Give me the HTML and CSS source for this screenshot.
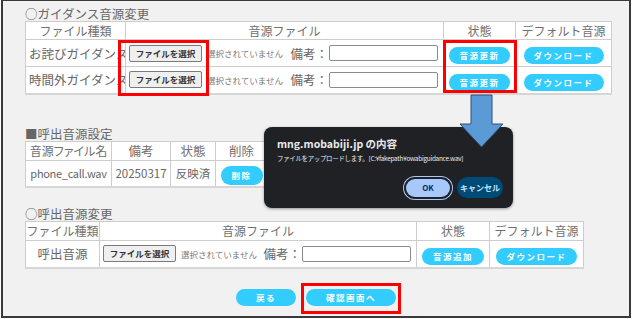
FILE: index.html
```
<!DOCTYPE html>
<html lang="ja">
<head>
<meta charset="utf-8">
<link rel="stylesheet" href="styles.css">
</head>
<body>
<div class="page">
  <div class="frame">
    <section class="sec sec1">
      <div class="sec-title">○ガイダンス音源変更</div>
      <table class="grid t1">
        <colgroup><col class="w100"><col class="w318"><col class="w72"><col class="w96"></colgroup>
        <tr><th>ファイル種類</th><th>音源ファイル</th><th>状態</th><th>デフォルト音源</th></tr>
        <tr>
          <td class="label">お詫びガイダンス</td>
          <td><div class="filecell"><span class="file-btn">ファイルを選択</span><span class="no-file">選択されていません</span><span class="note">備考：<span class="input"></span></span></div></td>
          <td><span class="pill w61">音源更新</span></td>
          <td><span class="pill w80">ダウンロード</span></td>
        </tr>
        <tr>
          <td class="label">時間外ガイダンス</td>
          <td><div class="filecell"><span class="file-btn">ファイルを選択</span><span class="no-file">選択されていません</span><span class="note">備考：<span class="input"></span></span></div></td>
          <td><span class="pill w61">音源更新</span></td>
          <td><span class="pill w80">ダウンロード</span></td>
        </tr>
      </table>
    </section>
    <section class="sec sec2">
      <div class="sec-title">■呼出音源設定</div>
      <table class="grid t2">
        <colgroup><col class="w86"><col class="w59"><col class="w45"><col class="w52"></colgroup>
        <tr><th class="narrow">音源ファイル名</th><th>備考</th><th>状態</th><th>削除</th></tr>
        <tr>
          <td class="data fname">phone_call.wav</td>
          <td class="data">20250317</td>
          <td class="data">反映済</td>
          <td><span class="pill w42 tall">削除</span></td>
        </tr>
      </table>
    </section>
    <section class="sec sec3">
      <div class="sec-title">○呼出音源変更</div>
      <table class="grid t3">
        <colgroup><col class="w74"><col class="w317"><col class="w73"><col class="w94"></colgroup>
        <tr><th>ファイル種類</th><th>音源ファイル</th><th>状態</th><th>デフォルト音源</th></tr>
        <tr>
          <td class="label center">呼出音源</td>
          <td><div class="filecell"><span class="file-btn">ファイルを選択</span><span class="no-file">選択されていません</span><span class="note">備考：<span class="input"></span></span></div></td>
          <td><span class="pill w62">音源追加</span></td>
          <td><span class="pill w81">ダウンロード</span></td>
        </tr>
      </table>
    </section>
    <div class="actions">
      <span class="pill w60">戻る</span>
      <span class="pill w90">確認画面へ</span>
    </div>
  </div>

  <div class="mark mark1"></div>
  <div class="mark mark2"></div>
  <div class="mark mark3"></div>

  <div class="dialog">
    <div class="dlg-title">mng.mobabiji.jp の内容</div>
    <div class="dlg-msg">ファイルをアップロードします。[C:¥fakepath¥owabiguidance.wav]</div>
    <div class="dlg-actions">
      <span class="dlg-ok">OK</span>
      <span class="dlg-cancel">キャンセル</span>
    </div>
  </div>

  <svg class="arrow" width="52" height="58" viewBox="0 0 52 58">
    <polygon points="16,2 37,2 37,31 48,31 26.5,54 5,31 16,31" fill="#5b9bd5" stroke="#2f4f78" stroke-width="1"/>
  </svg>
</div>
</body>
</html>
```
FILE: styles.css
```
* { box-sizing: border-box; }
body {
  margin: 0;
  background: #ffffff;
  font-family: "Noto Sans CJK JP", "Noto Sans", sans-serif;
  color: #666;
}
.page {
  position: relative;
  width: 634px;
  height: 319px;
  overflow: hidden;
}
.frame {
  margin-left: 1px;
  width: 630px;
  height: 318px;
  border: 2px solid #3a3a3a;
  border-top-width: 1px;
  background: #f1f1f1;
  padding-top: 6px;
}
.sec { padding-left: 22px; }
.sec2 { margin-top: 32px; }
.sec3 { margin-top: 19px; }
.sec-title {
  font-size: 12.5px;
  line-height: 14px;
  height: 14px;
  white-space: nowrap;
  color: #666;
}
.grid {
  border-collapse: collapse;
  table-layout: fixed;
  background: #fff;
  border-bottom: 2px solid #d6d6d6;
}
.t1 { width: 586px; }
.t2 { width: 242px; }
.t3 { width: 558px; }
.grid th, .grid td {
  border: 1px solid #cdcdcd;
  padding: 0;
  font-weight: normal;
  text-align: center;
  overflow: hidden;
  white-space: nowrap;
}
.grid th {
  height: 18px;
  font-size: 12px;
  line-height: 16px;
  color: #707070;
}
.sec2 .grid th, .sec3 .grid th { height: 19px; }
.grid td { height: 27px; }
.grid td.label {
  text-align: left;
  padding-left: 3px;
  font-size: 12.5px;
  color: #666;
}
.grid td.label.center { text-align: center; padding-left: 0; }
.grid td.data { font-size: 11.5px; color: #666; }
.grid td.fname { font-size: 11px; letter-spacing: -0.3px; }
.sec2 .grid th { font-size: 12.5px; }
.sec2 .grid th.narrow { font-size: 12px; font-feature-settings: "palt"; }

.w100 { width: 100px; } .w318 { width: 318px; } .w72 { width: 72px; } .w96 { width: 96px; }
.w86 { width: 86px; } .w59 { width: 59px; } .w45 { width: 45px; } .w52 { width: 52px; }
.w74 { width: 74px; } .w317 { width: 317px; } .w73 { width: 73px; } .w94 { width: 94px; }

.filecell {
  display: flex;
  align-items: center;
  padding: 0 5px 0 3px;
}
.file-btn {
  display: inline-block;
  flex: none;
  width: 73px;
  height: 17px;
  line-height: 15px;
  font-size: 8.5px;
  font-weight: bold;
  color: #333;
  background: #efefef;
  border: 1px solid #7a7a7a;
  border-radius: 2px;
  text-align: center;
}
.no-file {
  margin-left: 5px;
  font-size: 8.5px;
  color: #777;
}
.note {
  margin-left: auto;
  display: flex;
  align-items: center;
  font-size: 12.5px;
  color: #666;
}
.input {
  display: inline-block;
  width: 109px;
  height: 16px;
  margin-left: 1px;
  background: #fff;
  border: 1px solid #8a8a8a;
  border-radius: 2px;
}

.pill {
  display: inline-block;
  vertical-align: middle;
  height: 17px;
  line-height: 17px;
  border-radius: 9px;
  background: #33ccff;
  color: #fff;
  font-size: 8.5px;
  font-weight: bold;
  letter-spacing: 1.5px;
  text-align: center;
}
.pill.tall { height: 19px; line-height: 19px; border-radius: 10px; }
.w61 { width: 61px; } .w80 { width: 80px; } .w62 { width: 62px; } .w81 { width: 81px; }
.w42 { width: 42px; } .w60 { width: 60px; } .w90 { width: 90px; }

.actions {
  margin-top: 20px;
  display: flex;
  justify-content: center;
  gap: 10px;
}

.mark {
  position: absolute;
  border: 3px solid #ff0000;
}
.mark1 { left: 118px; top: 40px; width: 91px; height: 56px; }
.mark2 { left: 443px; top: 40px; width: 74px; height: 53px; }
.mark3 { left: 301px; top: 283px; width: 100px; height: 31px; }

.dialog {
  position: absolute;
  left: 264px;
  top: 127px;
  width: 249px;
  height: 81px;
  background: #202124;
  border-radius: 8px;
  box-shadow: 0 1px 3px rgba(0,0,0,0.4);
  padding: 10px 10px 0 13px;
  color: #e8eaed;
}
.dlg-title {
  font-size: 10.5px;
  font-weight: bold;
  line-height: 14px;
  white-space: nowrap;
}
.dlg-msg {
  margin-top: 3px;
  font-size: 6.4px;
  letter-spacing: -0.25px;
  line-height: 10px;
  white-space: nowrap;
}
.dlg-actions {
  margin-top: 13px;
  display: flex;
  justify-content: flex-end;
  gap: 7px;
}
.dlg-ok {
  width: 44px;
  height: 18px;
  margin-top: 2px;
  line-height: 18px;
  border-radius: 9px;
  background: #a8c7fa;
  color: #062e6f;
  font-size: 8px;
  font-weight: bold;
  text-align: center;
  box-shadow: 0 0 0 2px #202124, 0 0 0 3px #a8c7fa;
}
.dlg-cancel {
  width: 46px;
  height: 21px;
  line-height: 21px;
  border-radius: 11px;
  background: #004a77;
  color: #c2e7ff;
  font-size: 8px;
  font-weight: bold;
  text-align: center;
}
.arrow {
  position: absolute;
  left: 455px;
  top: 93px;
}
```
